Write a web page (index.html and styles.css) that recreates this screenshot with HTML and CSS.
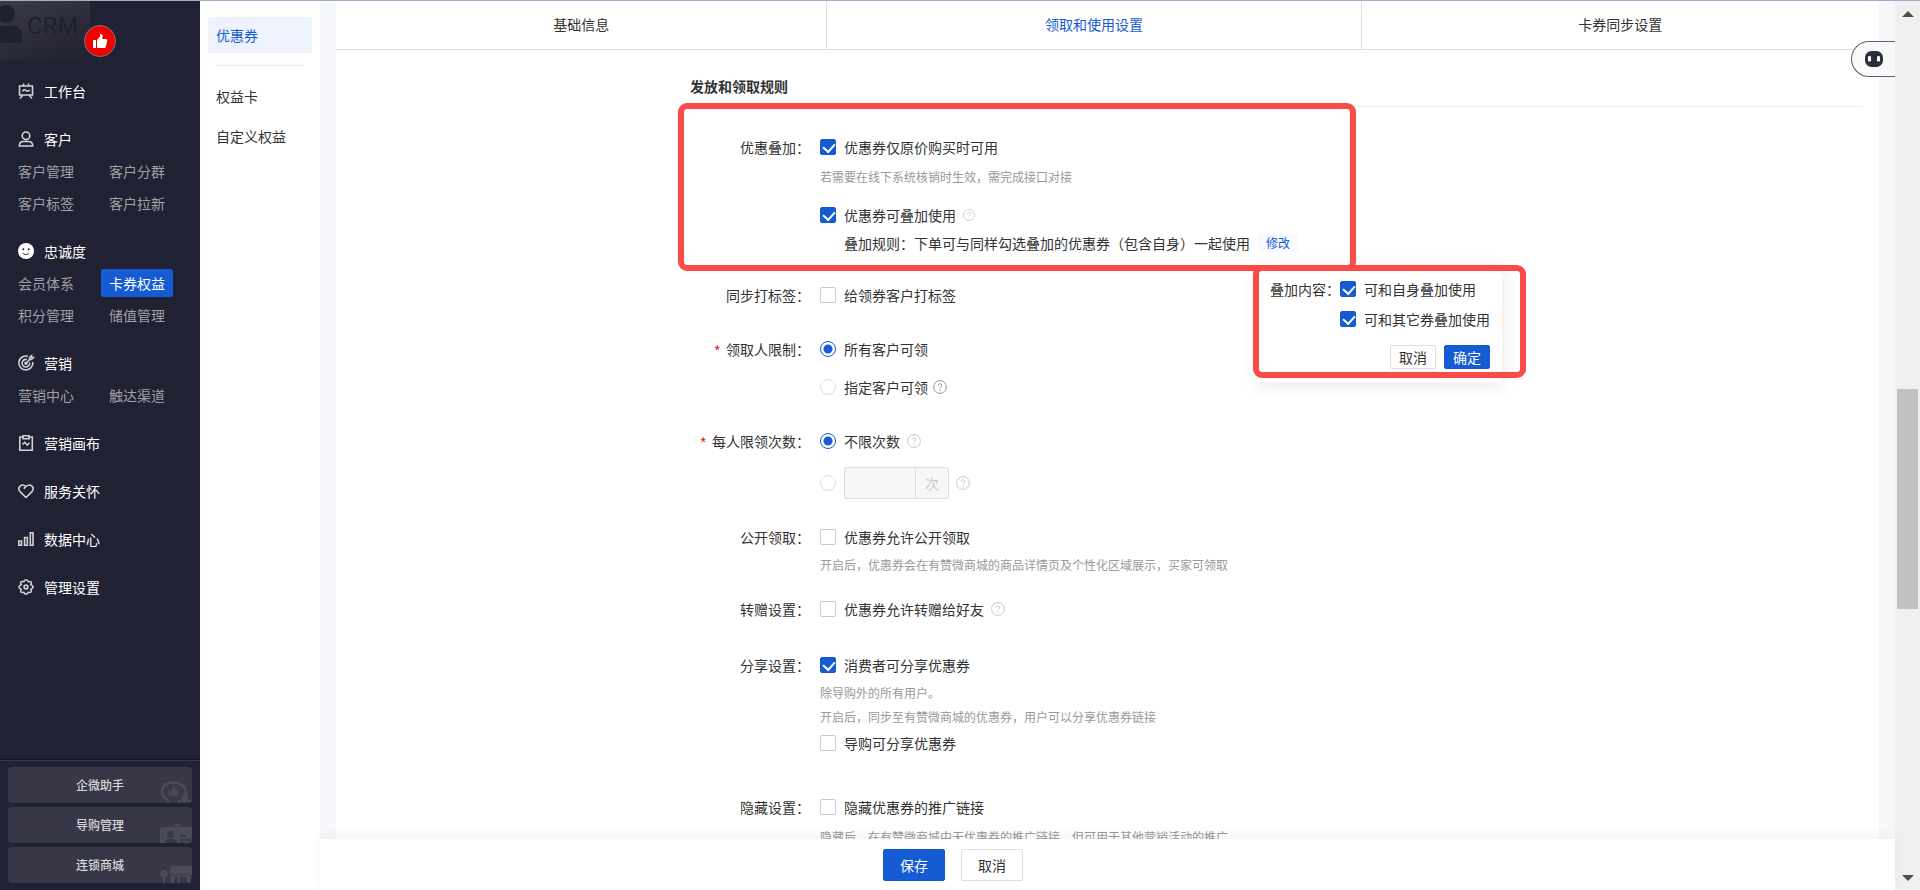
FILE: index.html
```html
<!DOCTYPE html>
<html lang="zh-CN">
<head>
<meta charset="utf-8">
<title>优惠券 - 领取和使用设置</title>
<link rel="stylesheet" href="styles.css">
</head>
<body>
<svg class="sprite" aria-hidden="true">
  <symbol id="help" viewBox="0 0 14 14"><circle cx="7" cy="7" r="6.4" fill="none" stroke="currentColor"/><path d="M5.2 5.6a1.8 1.8 0 1 1 2.7 1.5c-.6.4-.9.6-.9 1.3" fill="none" stroke="currentColor"/><circle cx="7" cy="10.2" r=".7" fill="currentColor"/></symbol>
  <symbol id="thumb" viewBox="0 0 16 16"><path d="M1 7h3v8H1zM5 7l3-3.500V1c1.800-.4 2.800.8 2.600 2.400L10.200 6H14c1 0 1.500.8 1.300 1.600l-1.500 6.200c-.2.8-.7 1.200-1.500 1.200H5z" fill="currentColor"/></symbol>
</svg>
<div class="app">
  <aside class="sidebar">
    <div class="brand">
      <svg class="brand-person" viewBox="0 0 22 38"><circle cx="6" cy="9" r="9" fill="currentColor"/><path d="M0 21h14a8 8 0 0 1 8 8v9H0z" fill="currentColor"/></svg>
      <span class="brand-name">CRM</span>
      <span class="brand-badge"><svg viewBox="0 0 16 16"><use href="#thumb"/></svg></span>
    </div>
    <nav class="menu">
      <section class="group"><a class="group-title" href="#"><svg class="icon" viewBox="0 0 16 16"><path d="M1.500 3h13v9h-13zM5.500 .5v2.500M10.500 .5v2.500M5 12l-3 3.500M11 12l3 3.500M4.500 8.300c1-2 2.300-2 3.500-.8s2.500 1 3.500-.7"/></svg>工作台</a></section>
      <section class="group"><a class="group-title" href="#"><svg class="icon" viewBox="0 0 16 16"><circle cx="8" cy="4.800" r="3.800"/><path d="M1.300 15c0-3 1.600-4.500 4.200-4.500h5c2.600 0 4.200 1.500 4.200 4.500z"/></svg>客户</a>
        <div class="links"><a href="#">客户管理</a><a href="#">客户分群</a><a href="#">客户标签</a><a href="#">客户拉新</a></div></section>
      <section class="group"><a class="group-title" href="#"><svg class="icon" viewBox="0 0 16 16"><circle class="face" cx="8" cy="8" r="8"/><circle class="face-mark" cx="5.300" cy="6.300" r="1"/><circle class="face-mark" cx="10.700" cy="6.300" r="1"/><path class="face-smile" d="M4.800 9.800c1.500 2.400 4.900 2.400 6.400 0"/></svg>忠诚度</a>
        <div class="links"><a href="#">会员体系</a><a class="current" href="#">卡券权益</a><a href="#">积分管理</a><a href="#">储值管理</a></div></section>
      <section class="group"><a class="group-title" href="#"><svg class="icon" viewBox="0 0 16 16"><path d="M10 1.300A7 7 0 1 0 14.800 7M9 4.600A3.800 3.800 0 1 0 11.600 7.500M8 8.200l4-4M11.500 4.500V2.500L13.500.8v1.700h1.800L13.500 4.500z"/><circle cx="7.900" cy="8.300" r=".9"/></svg>营销</a>
        <div class="links"><a href="#">营销中心</a><a href="#">触达渠道</a></div></section>
      <section class="group"><a class="group-title" href="#"><svg class="icon" viewBox="0 0 16 16"><path d="M5 2H1.800v13.200h12.500V2H11M5 .8h6v3H5zM4.500 9.500l2.200-2.200 2.600 2.800 2.200-2.300"/></svg>营销画布</a></section>
      <section class="group"><a class="group-title" href="#"><svg class="icon" viewBox="0 0 16 16"><path d="M8 14.500 2 8.600C-1.200 4.500 3.500-.2 8 3.400c4.500-3.600 9.200 1.100 6 5.200zM8 3.400 5.800 5.800"/></svg>服务关怀</a></section>
      <section class="group"><a class="group-title" href="#"><svg class="icon" viewBox="0 0 16 16"><path d="M.8 10h2.700v4.300H.8zM6.600 6.500h2.700v7.800H6.600zM12.300 1.800H15v12.500h-2.700z"/></svg>数据中心</a></section>
      <section class="group"><a class="group-title" href="#"><svg class="icon" viewBox="0 0 16 16"><path d="M5.800 2.600Q8-1 10.200 2.600 14.700 2 12.800 5.600 17.500 8 12.800 10.400 14.700 14 10.200 13.400 8 17 5.800 13.400 1.300 14 3.200 10.400-1.500 8 3.200 5.600 1.300 2 5.800 2.600z"/><circle cx="8" cy="8" r="1.900"/></svg>管理设置</a></section>
    </nav>
    <div class="shortcuts">
      <button type="button">企微助手<svg viewBox="0 0 32 22"><path d="M8 22v-3C-3 13 2 1.500 13 1.500S29 12 24 15.500" fill="none" stroke="currentColor" stroke-width="2.500"/><svg x="8" y="5" width="11" height="11" viewBox="0 0 16 16"><use href="#thumb"/></svg><circle cx="24.500" cy="18" r="3.500" fill="currentColor"/><circle cx="25" cy="13" r="1.600" fill="currentColor"/><circle cx="19.500" cy="20.500" r="1.800" fill="currentColor"/><circle cx="30" cy="20.500" r="1.800" fill="currentColor"/></svg></button>
      <button type="button">导购管理<svg viewBox="0 0 32 22"><path fill-rule="evenodd" fill="currentColor" d="M3 6h29v16h-8v-1H20v1h-3c0-2.500-2-4-4-4H9c-3 0-4 2-4 4H0V9q0-3 3-3zm7.500 4a3.500 3.500 0 1 0 .1 0zM20 14v2h6v-2zM20 18v2h11v-2z"/><path d="M14 5q0-2 3-2t3 2z" fill="currentColor"/></svg></button>
      <button type="button">连锁商城<svg viewBox="0 0 32 22"><path fill="currentColor" d="M12 5h20v9H30v8h-3v-6h-7v6h-2v-6h-4v6h-3v-8l-2-3zM3 22v-6C-1 15-1 9 4 9c4 0 5 4 3 7H5v6z"/><path d="M9 13q2 3 4 0 2 3 4 0 2 3 4 0 2 3 4 0 2 3 4 0" fill="none" stroke="#383747"/></svg></button>
    </div>
  </aside>

  <nav class="subnav">
    <a class="active" href="#">优惠券</a>
    <hr>
    <a href="#">权益卡</a>
    <a href="#">自定义权益</a>
  </nav>

  <div class="workspace">
    <main class="content">
      <div class="panel">
        <div class="tabs" role="tablist">
          <button class="tab tab-basic" type="button" role="tab">基础信息</button>
          <button class="tab tab-rules selected" type="button" role="tab">领取和使用设置</button>
          <button class="tab tab-sync" type="button" role="tab">卡券同步设置</button>
        </div>
        <form class="form" id="coupon">
          <h2>发放和领取规则</h2>
          <div class="row">
            <div class="label">优惠叠加：</div>
            <div class="field">
              <label class="choice"><input type="checkbox" checked>优惠券仅原价购买时可用</label>
              <p class="hint gap-10">若需要在线下系统核销时生效，需完成接口对接</p>
              <div class="line gap-18"><label class="choice"><input type="checkbox" checked>优惠券可叠加使用</label><svg class="help small"><use href="#help"/></svg></div>
              <div class="line rule gap-8">叠加规则：下单可与同样勾选叠加的优惠券（包含自身）一起使用
                <div class="edit">
                  <button class="edit-button" type="button">修改</button>
                  <div class="popover">
                    <div class="popover-body">
                      <span>叠加内容：</span>
                      <div>
                        <label class="choice"><input type="checkbox" checked>可和自身叠加使用</label>
                        <label class="choice gap-10"><input type="checkbox" checked>可和其它券叠加使用</label>
                      </div>
                    </div>
                    <div class="popover-actions"><button class="button compact" type="button">取消</button><button class="button compact primary" type="button">确定</button></div>
                  </div>
                </div>
              </div>
            </div>
          </div>
          <div class="row gap-32">
            <div class="label">同步打标签：</div>
            <div class="field"><label class="choice"><input type="checkbox">给领券客户打标签</label></div>
          </div>
          <div class="row gap-34">
            <div class="label required">领取人限制：</div>
            <div class="field">
              <label class="choice"><input type="radio" name="who" checked>所有客户可领</label>
              <div class="line near gap-18"><label class="choice"><input type="radio" name="who">指定客户可领</label><svg class="help dark"><use href="#help"/></svg></div>
            </div>
          </div>
          <div class="row gap-34">
            <div class="label required">每人限领次数：</div>
            <div class="field">
              <div class="line"><label class="choice"><input type="radio" name="times" checked>不限次数</label><svg class="help"><use href="#help"/></svg></div>
              <div class="line gap-16"><div class="choice"><input type="radio" name="times" aria-label="限制次数"><span class="count"><input type="text" disabled aria-label="次数"><span>次</span></span></div><svg class="help"><use href="#help"/></svg></div>
            </div>
          </div>
          <div class="row gap-28">
            <div class="label">公开领取：</div>
            <div class="field">
              <label class="choice"><input type="checkbox">优惠券允许公开领取</label>
              <p class="hint gap-8">开启后，优惠券会在有赞微商城的商品详情页及个性化区域展示，买家可领取</p>
            </div>
          </div>
          <div class="row gap-24">
            <div class="label">转赠设置：</div>
            <div class="field"><div class="line"><label class="choice"><input type="checkbox">优惠券允许转赠给好友</label><svg class="help"><use href="#help"/></svg></div></div>
          </div>
          <div class="row gap-36">
            <div class="label">分享设置：</div>
            <div class="field">
              <label class="choice"><input type="checkbox" checked>消费者可分享优惠券</label>
              <p class="hint gap-8">除导购外的所有用户。</p>
              <p class="hint gap-4">开启后，同步至有赞微商城的优惠券，用户可以分享优惠券链接</p>
              <label class="choice gap-6"><input type="checkbox">导购可分享优惠券</label>
            </div>
          </div>
          <div class="row gap-44">
            <div class="label">隐藏设置：</div>
            <div class="field">
              <label class="choice"><input type="checkbox">隐藏优惠券的推广链接</label>
              <p class="hint gap-10">隐藏后，在有赞微商城中无优惠券的推广链接，但可用于其他营销活动的推广</p>
            </div>
          </div>
          <div class="mark mark-rules"></div>
          <div class="mark mark-popover"></div>
        </form>
      </div>
    </main>
    <footer class="footer"><button class="button primary" type="submit" form="coupon">保存</button><button class="button" type="button">取消</button></footer>
    <button class="assistant" type="button" aria-label="智能助手"><svg viewBox="0 0 20 18"><rect x="1" y="1" width="18" height="16" rx="6.500" fill="#2b303c"/><rect x="4" y="6" width="3" height="5.500" rx="1.300" fill="#fff"/><rect x="13" y="6" width="3" height="5.500" rx="1.300" fill="#fff"/></svg></button>
  </div>

  <div class="scrollbar">
    <svg viewBox="0 0 12 6"><path d="M6 0 12 6H0z" fill="#505050"/></svg>
    <div class="track"><div class="thumb"></div></div>
    <svg viewBox="0 0 12 6"><path d="M0 0h12L6 6z" fill="#505050"/></svg>
  </div>
</div>
</body>
</html>
```

FILE: styles.css
```css
* { box-sizing: border-box; }

body {
  margin: 0;
  color: #333;
  background: #fff;
  font: 14px/20px "Noto Sans CJK SC", sans-serif;
}

button, input { font: inherit; color: inherit; margin: 0; }
button { padding: 0; border: 0; background: none; cursor: pointer; }
a { color: inherit; text-decoration: none; }
p, h2 { margin: 0; }
.sprite { display: none; }

.app {
  display: flex;
  height: 100vh;
  border-top: 1px solid #a0adc9;
  overflow: hidden;
}

/* Main navigation */
.sidebar {
  display: flex;
  flex: none;
  flex-direction: column;
  width: 200px;
  background: #202132;
  color: #fff;
}

.brand {
  position: relative;
  width: 90px;
  height: 60px;
  margin-bottom: 14px;
  background: linear-gradient(160deg, #3b3a48, #282836 65%, #202132);
  color: #1f2030;
}

.brand-person { position: absolute; left: 0; top: 4px; width: 22px; height: 38px; }
.brand-name { position: absolute; left: 27px; top: 10px; font: 24px/30px Roboto, sans-serif; }

.brand-badge {
  position: absolute;
  left: 84px;
  top: 24px;
  display: flex;
  align-items: center;
  justify-content: center;
  width: 32px;
  height: 32px;
  border: 1px solid #777;
  border-radius: 50%;
  background: #f20000;
  color: #fff;
}

.brand-badge svg { width: 16px; height: 16px; }

.menu { display: flex; flex: 1; flex-direction: column; gap: 16px; }
.group-title { display: flex; align-items: center; gap: 10px; height: 32px; padding-left: 18px; }
.icon { width: 16px; height: 16px; fill: none; stroke: #d2d2d6; stroke-width: 1.6; overflow: visible; }
.face { fill: #fff; stroke: none; }
.face-mark { fill: #202132; stroke: none; }
.face-smile { stroke: #202132; stroke-width: 1; }
.links { display: grid; grid-template-columns: 72px 72px; column-gap: 19px; padding-left: 10px; color: #a0a0a6; }
.links a { height: 28px; margin: 2px 0; padding: 0 8px; border-radius: 2px; line-height: 28px; white-space: nowrap; }
.links .current { background: #155bd4; color: #fff; }

.shortcuts {
  display: flex;
  flex-direction: column;
  gap: 4px;
  padding: 6px 8px 7px;
  border-top: 1px solid #36374a;
  box-shadow: 0 -1px 0 #12131f;
}

.shortcuts button {
  position: relative;
  height: 36px;
  border-radius: 4px;
  background: #383747;
  color: #d7d7da;
  font-size: 12px;
  font-weight: 500;
  overflow: hidden;
}

.shortcuts button > svg { position: absolute; right: 0; bottom: 0; width: 32px; height: 22px; color: #4b4a5b; }

/* Secondary navigation */
.subnav { display: flex; flex: none; flex-direction: column; width: 120px; padding: 16px 8px; gap: 4px; }
.subnav a { padding: 8px; border-radius: 2px; }
.subnav .active { background: #edf2fd; color: #155bd4; }
.subnav hr { width: 88px; height: 1px; margin: 8px auto; border: 0; background: #ebebeb; }

/* Workspace */
.workspace { position: relative; display: flex; flex: 1; flex-direction: column; min-width: 0; }
.content { flex: 1; min-height: 0; padding: 0 16px; background: #f6f7fa; overflow: hidden; }
.panel { min-height: 100%; background: #fff; }

.tabs { display: flex; height: 49px; border-bottom: 1px solid #dcdee0; }
.tab { padding-bottom: 2px; border-right: 1px solid #dcdee0; }
.tab-basic { flex: 491 1 0; }
.tab-rules { flex: 534 1 0; }
.tab-sync { flex: 518 1 0; border-right: 0; }
.tab.selected { color: #155bd4; }

.form { position: relative; margin: 0 16px 0 354px; }
.form h2 { padding: 26px 0 10px; border-bottom: 1px solid #ebedf0; margin-bottom: 30px; font-size: 14px; font-weight: 700; line-height: 20px; }
.row { display: grid; grid-template-columns: 120px 1fr; column-gap: 10px; }
.label { text-align: right; white-space: nowrap; }
.required::before { content: "*"; margin-right: 6px; color: #d40000; font-family: "Liberation Sans", sans-serif; }
.field { min-width: 0; }
.line { display: flex; align-items: center; gap: 7px; }
.line.near { gap: 5px; }
.rule { gap: 8px; padding-left: 24px; white-space: nowrap; }
.choice { display: flex; align-items: center; gap: 8px; }
.hint { color: #999; font-size: 12px; line-height: 20px; }

.gap-4 { margin-top: 4px; }
.gap-6 { margin-top: 6px; }
.gap-8 { margin-top: 8px; }
.gap-10 { margin-top: 10px; }
.gap-16 { margin-top: 16px; }
.gap-18 { margin-top: 18px; }
.gap-24 { margin-top: 24px; }
.gap-28 { margin-top: 28px; }
.gap-32 { margin-top: 32px; }
.gap-34 { margin-top: 34px; }
.gap-36 { margin-top: 36px; }
.gap-44 { margin-top: 44px; }

input[type="checkbox"], input[type="radio"] {
  flex: none;
  width: 16px;
  height: 16px;
  appearance: none;
  border: 1px solid #c8c9cc;
  border-radius: 2px;
  background: #fff;
}

input[type="radio"] { border-color: #dcdee0; border-radius: 50%; }

input[type="checkbox"]:checked {
  position: relative;
  border-color: #155bd4;
  background: #155bd4;
}

input[type="checkbox"]:checked::after {
  content: "";
  position: absolute;
  left: 4px;
  top: 1px;
  width: 6px;
  height: 9px;
  border: solid #fff;
  border-width: 0 2px 2px 0;
  transform: rotate(42deg);
}

input[type="radio"]:checked {
  border-color: #155bd4;
  background: radial-gradient(circle, #155bd4 4px, #fff 5px);
}

.help { width: 14px; height: 14px; color: #c8c9cc; }
.help.small { width: 12px; height: 12px; }
.help.dark { color: #969799; }

.count { display: flex; width: 105px; height: 32px; border: 1px solid #dcdee0; border-radius: 2px; background: #f7f7f7; color: #c8c9cc; line-height: 30px; }
.count input { flex: 1; min-width: 0; padding: 0 8px; border: 0; border-right: 1px solid #dcdee0; background: none; }
.count span { width: 32px; text-align: center; }

/* Stacking rule editor */
.edit { position: relative; }
.edit-button { display: block; width: 40px; height: 18px; border-radius: 2px; background: #f7f9fe; color: #155bd4; font-size: 12px; line-height: 18px; }
.popover {
  position: absolute;
  z-index: 1;
  left: 0;
  top: 33px;
  padding: 12px 12px 13px;
  background: #fff;
  box-shadow: 0 2px 16px rgba(50, 50, 51, 0.12);
}

.popover::before {
  content: "";
  position: absolute;
  left: 11px;
  top: -4px;
  width: 8px;
  height: 8px;
  background: #fff;
  transform: rotate(45deg);
}

.popover-body { display: flex; }
.popover-actions { display: flex; justify-content: flex-end; gap: 8px; margin-top: 16px; }

.button { width: 62px; height: 32px; border: 1px solid #dcdee0; border-radius: 2px; background: #fff; line-height: 30px; }
.button.compact { width: 46px; height: 24px; line-height: 22px; }
.button.primary { border-color: #155bd4; background: #155bd4; color: #fff; }

/* Highlight frames */
.mark { position: absolute; z-index: 2; border: 6px solid #f94b48; border-radius: 9px; pointer-events: none; }
.mark-rules { left: -12px; top: 53px; width: 678px; height: 168px; }
.mark-popover { left: 563px; top: 215px; width: 273px; height: 113px; }

.footer {
  position: relative;
  display: flex;
  gap: 16px;
  padding: 10px 0 9px 563px;
  background: #fff;
  box-shadow: 0 -3px 12px rgba(0, 0, 0, 0.05);
}

.assistant {
  position: absolute;
  right: 0;
  top: 40px;
  display: flex;
  align-items: center;
  width: 44px;
  height: 36px;
  padding-left: 12px;
  border: 1px solid #586478;
  border-right: 0;
  border-radius: 18px 0 0 18px;
  background: #f9f9f9;
}

.assistant svg { width: 20px; height: 18px; }

.scrollbar { display: flex; flex: none; flex-direction: column; align-items: center; width: 25px; padding: 10px 0 9px; background: #f0f0f0; }
.scrollbar > svg { width: 12px; height: 6px; }
.track { display: flex; flex: 1; flex-direction: column; align-self: stretch; padding: 372px 2px 0; }
.thumb { height: 220px; background: #c1c1c1; }
```
